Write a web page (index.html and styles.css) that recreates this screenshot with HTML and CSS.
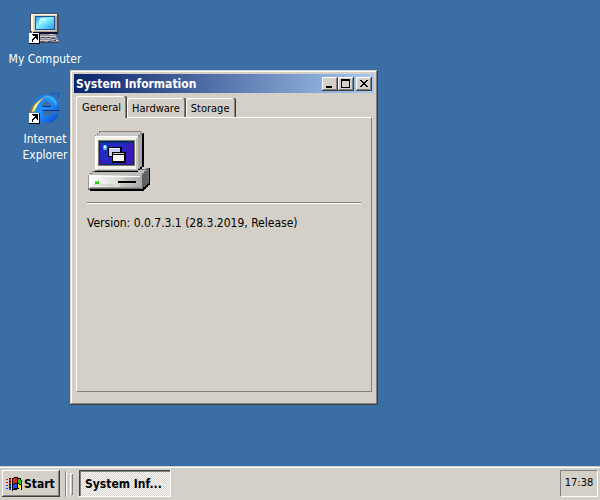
FILE: index.html
```
<!DOCTYPE html>
<html lang="en">
<head>
<meta charset="utf-8">
<title>Desktop</title>
<link rel="stylesheet" href="styles.css">
</head>
<body>
<main class="desktop">
  <nav class="shortcuts" aria-label="Desktop">
    <a class="shortcut" href="#computer">
      <svg class="shortcut-icon" viewBox="0 0 32 32" shape-rendering="crispEdges" aria-hidden="true">
        <defs><linearGradient id="glow" x1="0" y1="0" x2="1" y2="1"><stop offset="0" stop-color="#2b9ff5"/><stop offset=".4" stop-color="#8af2ff"/><stop offset="1" stop-color="#269af0"/></linearGradient></defs>
        <path fill="#4a4a60" d="M1 2h1V1h27v1h1v20H3v-2H1z"/>
        <path fill="#d9d6c6" d="M2 2h26v19H3v-2H2z"/>
        <path fill="#fffbe0" d="M2 2h26v1H4v16H2z"/>
        <path fill="#a9a6a0" d="M26 4h2v16H5v-1h21z"/>
        <path fill="#24508c" d="M6 4h20v14H6z"/>
        <path fill="url(#glow)" d="M7 5h18v12H7z"/>
        <path fill="#b5fbff" d="M11 6h7v1h-2v2h-4v3h-2V8h1z"/>
        <path fill="#101028" d="M4 20h24v1h1v1H4z"/>
        <path fill="#8c8aa0" d="M7 22h20v2h1v2h1v2h1v3H11v-7H7z"/>
        <path fill="#d0cbb2" d="M11 24h14v1H11zm0 4h10v1H11zM13 26h3v1h-3zm5 0h3v1h-3zm5 1h3v1h-3zM20 22h5v1h-5z"/>
        <path fill="#42425c" d="M11 30h19v1H11zM13 25h3v1h-3zm5 0h3v1h-3zm5 1h3v1h-3zM12 29h3v1h-3zm7 0h3v1h-3zm6-1h2v1h-2z"/>
        <path fill="#f0dfa0" d="M27 28h2v1h-2zM25 24h2v1h-2z"/>
        <path fill="#000" d="M0 21h11v11H0z"/><path fill="#fff" d="M0 21h10v10H0z"/>
        <path fill="#000" d="M3 22h6v6H8v-1H7v-1H6v1H5v1H4v2H3v-3h1v-1h1v-1h1v-1H4v-1H3z"/>
      </svg>
      <span>My Computer</span>
    </a>
    <a class="shortcut" href="#explorer">
      <svg class="shortcut-icon" viewBox="0 0 32 32" aria-hidden="true">
        <defs><linearGradient id="ie" x1="0" y1="0" x2="1" y2="1"><stop offset="0" stop-color="#1670e8"/><stop offset=".45" stop-color="#2196ff"/><stop offset="1" stop-color="#0b43c8"/></linearGradient></defs>
        <path fill="none" stroke="#1262cd" stroke-width="1.5" d="M21 3c5-3 9-3 9-1 0 1 0 2-1 4"/>
        <path fill="url(#ie)" fill-rule="evenodd" d="M17 3c8 0 13 6 13 16H14c0 3 2 5 4 5 3 0 4-1 5-3h7c-2 7-6 10-12 10C9 31 3 25 3 17S9 3 17 3zM13 14h9c0-3-2-5-4-5s-5 2-5 5z"/>
        <path fill="none" stroke="#36b4ff" stroke-width="2" d="M15 5c6-1 11 2 12 8"/>
        <path fill="#092c91" d="M13 18h17v1H13zM13 14h9v1h-9z"/>
        <path fill="#947b32" d="M1 22C1 14 8 7 18 4 11 8 5 14 4 22z"/>
        <path fill="#f7df75" d="M3 20C4 13 9 9 16 5 10 10 7 14 6 19z"/>
        <path fill="#fff8bd" d="M5 16c2-4 4-6 7-8-2 3-4 5-5 8z"/>
        <g shape-rendering="crispEdges"><path fill="#000" d="M0 21h11v11H0z"/><path fill="#fff" d="M0 21h10v10H0z"/>
        <path fill="#000" d="M3 22h6v6H8v-1H7v-1H6v1H5v1H4v2H3v-3h1v-1h1v-1h1v-1H4v-1H3z"/></g>
      </svg>
      <span>Internet Explorer</span>
    </a>
  </nav>

  <section class="window" aria-labelledby="window-title">
    <header class="titlebar">
      <h1 class="title" id="window-title">System Information</h1>
      <div class="controls">
        <button class="control" type="button" aria-label="Minimize"><svg viewBox="0 0 12 10" shape-rendering="crispEdges"><path d="M2 7h6v2H2z"/></svg></button>
        <button class="control" type="button" aria-label="Maximize"><svg viewBox="0 0 12 10" shape-rendering="crispEdges"><path fill-rule="evenodd" d="M1 0h9v9H1zM2 2v6h7V2z"/></svg></button>
        <button class="control close" type="button" aria-label="Close"><svg viewBox="0 0 12 10" shape-rendering="crispEdges"><path d="M2 1h2v1h1v1h2V2h1V1h2v1H9v1H8v1H7v1h1v1h1v1h1v1H8V7H7V6H5v1H4v1H2V7h1V6h1V5h1V4H4V3H3V2H2z"/></svg></button>
      </div>
    </header>
    <div class="tabs" role="tablist">
      <button class="tab active" type="button" role="tab" aria-selected="true">General</button>
      <button class="tab" type="button" role="tab" aria-selected="false">Hardware</button>
      <button class="tab" type="button" role="tab" aria-selected="false">Storage</button>
    </div>
    <div class="panel" role="tabpanel">
      <svg class="computer" viewBox="7 4 64 64" shape-rendering="crispEdges" aria-hidden="true">
        <defs>
          <pattern id="dots" width="2" height="2" patternUnits="userSpaceOnUse"><path fill="#6000a0" d="M0 0h1v1H0zM1 1h1v1H1z"/></pattern>
          <pattern id="shade" width="2" height="2" patternUnits="userSpaceOnUse"><path fill="#a0a0a0" d="M0 0h1v1H0zM1 1h1v1H1z"/></pattern>
          <linearGradient id="case" x1="0" y1="0" x2="1" y2="0"><stop offset="0" stop-color="#fff"/><stop offset=".5" stop-color="#e0e0da"/><stop offset="1" stop-color="#aaa"/></linearGradient>
        </defs>
        <path fill="#808080" d="M15 10h2V8h2V6h43v2h2v34h-2v2h-2v2H15z"/>
        <path fill="#c8c8c8" d="M16 10h2V8h2V7h42v1h-2v2h-2v1H16z"/>
        <path fill="#000" d="M63 8h1v34h-2v2h-2v2h-2v-2h2v-2h2V9h1z"/>
        <path fill="#a8a8a8" d="M58 12h2v-2h2v31h-2v2h-2z"/>
        <path fill="url(#shade)" d="M59 20h3v21h-3z"/>
        <path fill="#f0f0e9" d="M15 11h43v34H15z"/>
        <path fill="#fff" d="M15 11h43v1H17v32h-2z"/>
        <path fill="#c4c4bc" d="M56 13h2v32H17v-1h39z"/>
        <path fill="#807868" d="M18 15h37v26H18z"/>
        <path fill="#003070" d="M19 16h35v24H19z"/>
        <path fill="#2628c4" d="M20 18h33v21H20z"/>
        <path fill="url(#dots)" d="M46 18h7v21H39v-3h7zM20 35h8v4h-8z" opacity=".6"/>
        <path fill="#3a80e8" d="M23 20h4v5h-4z"/>
        <path fill="#50d0ff" d="M24 20h2v5h-2zM23 22h4v1h-4z"/><path fill="#fff" d="M24 21h2v2h-2z"/>
        <path fill="#000" d="M28 22h14v10H28z"/><path fill="#c5ccff" d="M29 24h11v7H29z"/><path fill="#eef" d="M29 23h11v1H29z"/>
        <path fill="#000" d="M32 27h14v11H32z"/><path fill="#f5f5f5" d="M33 30h11v6H33z"/><path fill="#c8c8d0" d="M33 28h11v1H33z"/>
        <path fill="#707070" d="M8 50h2v-2h2v-2h48v-2h6v-1h3v18h-2v2h-2v2H8z"/>
        <path fill="#bdbdbd" d="M12 47h46v-2h8v1h-2v2h-2v2H10v-1h2z"/>
        <path fill="#000" d="M15 46h43v1H15zM69 43h1v17h-2v2h-2v2h-2v2H10v-2h53v-2h2v-2h2v-2h2z"/>
        <path fill="#606060" d="M62 50h2v-2h2v-2h2v13h-2v2h-2v1h-2z"/>
        <path fill="url(#case)" d="M9 50h53v13H9z"/>
        <path fill="#fff" d="M10 51h50v1H11v9h-1z"/>
        <path fill="#999" d="M8 50h1v13H8zM10 62h52v1H10z"/>
        <path fill="url(#shade)" d="M44 53h17v2H44zM40 59h21v3H40zM13 59h20v2H13z" opacity=".5"/>
        <path fill="#20c820" d="M15 56h4v3h-4z"/><path fill="#70ff60" d="M15 56h3v1h-3z"/>
        <path fill="#000" d="M38 56h18v2H38z"/>
      </svg>
      <hr class="rule">
      <p class="version">Version: 0.0.7.3.1 (28.3.2019, Release)</p>
    </div>
  </section>
</main>

<footer class="taskbar">
  <button class="start" type="button">
    <svg class="flag" viewBox="0 0 16 14" shape-rendering="crispEdges" aria-hidden="true">
      <path fill="#000" d="M6 1h2V0h4v1h3v2h1v10h-1v-1h-4v1H7v1H6z"/>
      <path fill="#f02020" d="M7 2h1V1h3v5H8v1H7z"/><path fill="#20c820" d="M12 2h2v1h1v4h-2V6h-1z"/>
      <path fill="#2848ff" d="M7 8h1V7h3v4H8v1H7z"/><path fill="#f8e820" d="M12 7h1v1h2v4h-2v-1h-1z"/>
      <path fill="#e02020" d="M3 2h2v2H3zM0 2h2v1H0zM3 5h2v2H3zM0 5h2v1H0z"/>
      <path fill="#2040e0" d="M3 8h2v2H3zM0 8h2v1H0zM3 11h2v2H3zM0 11h2v1H0z"/>
      <path fill="#000" d="M3 4h2v1H3zM3 7h2v1H3zM3 10h2v1H3zM3 1h2v1H3z"/>
    </svg>
    <span>Start</span>
  </button>
  <span class="divider"></span>
  <span class="grip"></span>
  <button class="task" type="button" aria-pressed="true">System Inf...</button>
  <time class="clock">17:38</time>
</footer>
</body>
</html>
```

FILE: styles.css
```
* {
  box-sizing: border-box;
}

body {
  margin: 0;
  min-height: 100vh;
  display: flex;
  flex-direction: column;
  background: #3a6ea5;
  color: #000;
  font: 12px/16px Tahoma, "DejaVu Sans Condensed", "DejaVu Sans", sans-serif;
  font-stretch: condensed;
}

button {
  margin: 0;
  padding: 0;
  border: 0;
  background: #d4d0c8;
  color: inherit;
  font: inherit;
}

.desktop {
  position: relative;
  flex: 1;
}

.shortcuts {
  display: flex;
  flex-direction: column;
  align-items: flex-start;
  gap: 16px;
  padding: 12px 8px;
}

.shortcut {
  display: flex;
  flex-direction: column;
  align-items: center;
  gap: 7px;
  width: 74px;
  min-height: 64px;
  color: #fff;
  text-align: center;
  text-decoration: none;
}

.shortcut-icon {
  width: 32px;
  height: 32px;
}

.window {
  position: absolute;
  left: 70px;
  top: 70px;
  display: flex;
  flex-direction: column;
  width: 308px;
  min-height: 335px;
  padding: 4px;
  background: #d4d0c8;
  box-shadow: inset -1px -1px #404040, inset 1px 1px #d4d0c8, inset -2px -2px #808080, inset 2px 2px #fff;
}

.titlebar {
  display: flex;
  align-items: center;
  height: 19px;
  padding: 0 2px;
  background: linear-gradient(to right, #0a246a, #a6caf0);
  color: #fff;
}

.title {
  flex: 1;
  margin: 0;
  font-size: 12px;
  line-height: 20px;
}

.controls {
  display: flex;
  height: 14px;
}

.control {
  width: 16px;
  height: 14px;
  padding: 2px;
  box-shadow: inset -1px -1px #404040, inset 1px 1px #fff, inset -2px -2px #808080;
}

.control svg {
  display: block;
  width: 12px;
  height: 10px;
}

.close {
  margin-left: 2px;
}

.tabs {
  display: flex;
  align-items: flex-end;
  height: 24px;
  padding: 0 2px;
}

.tab {
  height: 19px;
  padding: 3px 6px 0 5px;
  border-radius: 2px 2px 0 0;
  box-shadow: inset -1px 0 #404040, inset -2px 0 #808080, inset 1px 1px #fff;
  font-size: 11px;
}

.tab.active {
  position: relative;
  height: 22px;
  margin-bottom: -1px;
  padding: 1px 6px 0;
}

.panel {
  flex: 1;
  margin: 0 2px 9px;
  padding: 11px 10px;
  border: 1px solid;
  border-color: #fff #808080 #808080 #fff;
}

.computer {
  display: block;
  width: 64px;
  height: 64px;
}

.rule {
  height: 2px;
  margin: 9px 0 11px;
  border: 0;
  border-top: 1px solid #808080;
  border-bottom: 1px solid #fff;
}

.version {
  margin: 0;
}

.taskbar {
  display: flex;
  align-items: center;
  height: 34px;
  padding: 1px 2px 0;
  background: #d4d0c8;
  box-shadow: inset 0 1px #d4d0c8, inset 0 2px #fff;
}

.start {
  display: flex;
  align-items: center;
  gap: 2px;
  width: 58px;
  height: 27px;
  padding: 0 4px;
  box-shadow: inset -1px -1px #404040, inset 1px 1px #fff, inset -2px -2px #808080;
  font-weight: bold;
}

.flag {
  width: 16px;
  height: 14px;
}

.divider {
  width: 2px;
  height: 26px;
  margin-left: 5px;
  border-left: 1px solid #808080;
  border-right: 1px solid #fff;
}

.grip {
  width: 3px;
  height: 22px;
  margin: 0 6px 0 3px;
  box-shadow: inset 1px 1px #fff, inset -1px -1px #808080;
}

.task {
  width: 92px;
  height: 27px;
  padding: 0 5px 0 6px;
  background: repeating-conic-gradient(#fff 0 25%, #d4d0c8 0 50%) 0 0 / 2px 2px;
  box-shadow: inset -1px -1px #fff, inset 1px 1px #404040, inset 2px 2px #808080;
  font-weight: bold;
  text-align: left;
  white-space: nowrap;
}

.clock {
  width: 38px;
  height: 27px;
  margin-left: auto;
  border: 1px solid;
  border-color: #808080 #fff #fff #808080;
  font-size: 11px;
  line-height: 23px;
  text-align: center;
}
```
